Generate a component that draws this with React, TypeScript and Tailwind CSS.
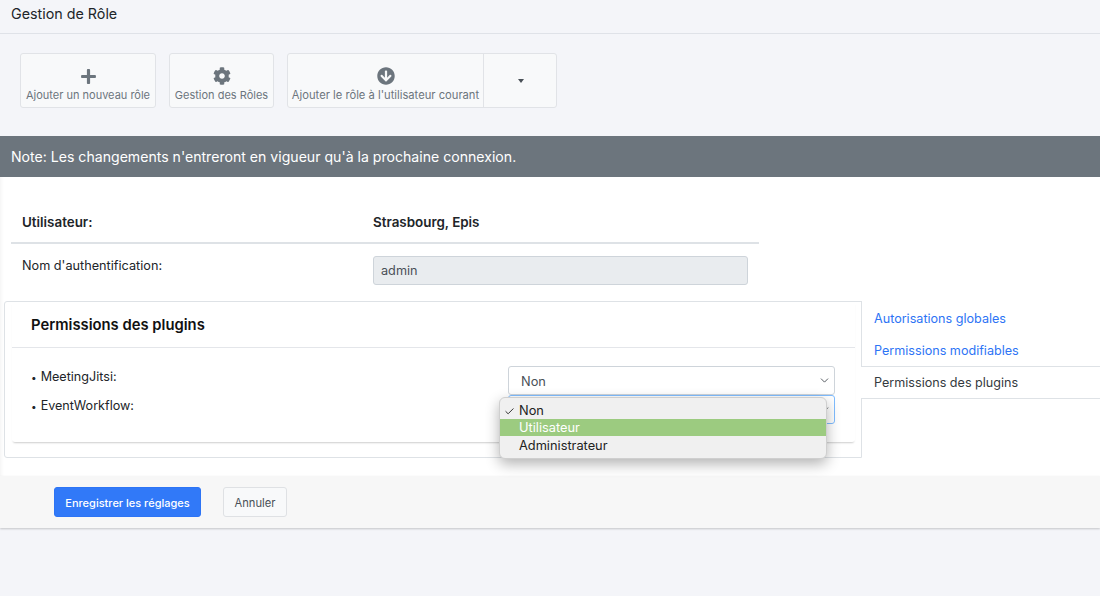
import { ChevronDown, Check } from 'lucide-react'
import { FaPlus, FaCog, FaArrowCircleDown } from 'react-icons/fa'

function ToolButton({ label, icon, width, size }: { label: string; icon: React.ReactNode; width: string; size: string }) {
  return (
    <div className={`${width} flex h-full flex-col items-center justify-end pb-[5px]`}>
      <div className="flex h-[20px] items-center justify-center text-[#6c757d]">{icon}</div>
      <span className={`${size} mt-[2px] whitespace-nowrap leading-[14px] text-[#6c757d]`}>{label}</span>
    </div>
  )
}

function SelectBox({ focus }: { focus?: boolean }) {
  return (
    <div
      className={`flex h-[29px] w-[327px] items-center justify-between rounded-[3px] border bg-white pl-[12px] pr-[3px] text-[12.8px] text-[#495057] ${
        focus ? 'border-[#80bdff]' : 'border-[#ced4da]'
      }`}
    >
      <span className="pt-[2px]">Non</span>
      <ChevronDown size={13} strokeWidth={1.5} className="text-[#343a40]" />
    </div>
  )
}

function PluginRow({ label }: { label: string }) {
  return (
    <div className="flex h-[29px] items-start">
      <span className="w-[496px] pl-[19px] text-[12.6px] leading-[21px] text-[#212529]">
        <span className="mr-[4px] text-[10px]">•</span>
        {label}
      </span>
      <SelectBox focus={label === 'EventWorkflow:'} />
    </div>
  )
}

export default function App() {
  return (
    <div className="relative flex h-[596px] w-[1100px] flex-col overflow-hidden bg-[#f4f5f9] font-['Inter',sans-serif]">
      <header className="flex h-[34px] items-center border-b border-[#dfe2e8] px-[11px] pb-[6px] text-[14.3px] text-[#212529]">
        Gestion de Rôle
      </header>

      <div className="flex h-[102px] items-start gap-[13px] pl-[20px] pt-[19px]">
        <div className="h-[55px] rounded-[3px] border border-[#e1e3e7] bg-[#f8f9fa]">
          <ToolButton width="w-[134px]" size="text-[11px]" label="Ajouter un nouveau rôle" icon={<FaPlus size={17} />} />
        </div>
        <div className="h-[55px] rounded-[3px] border border-[#e1e3e7] bg-[#f8f9fa]">
          <ToolButton width="w-[103px]" size="text-[11px]" label="Gestion des Rôles" icon={<FaCog size={18} />} />
        </div>
        <div className="flex h-[55px] rounded-[3px] border border-[#e1e3e7] bg-[#f8f9fa]">
          <ToolButton
            width="w-[195px]"
            size="text-[11.2px]"
            label="Ajouter le rôle à l'utilisateur courant"
            icon={<FaArrowCircleDown size={18} />}
          />
          <div className="flex w-[73px] items-center justify-center border-l border-[#e1e3e7] pl-[2px]">
            <span className="h-0 w-0 border-x-[3.5px] border-t-[4px] border-x-transparent border-t-[#495057]" />
          </div>
        </div>
      </div>

      <div className="flex h-[41px] items-center bg-[#6c757d] px-[11px] text-[14.1px] text-white">
        Note: Les changements n'entreront en vigueur qu'à la prochaine connexion.
      </div>

      <main className="h-[299px] bg-white shadow-[inset_5px_0_5px_-5px_rgba(0,0,0,0.08)]">
        <div className="ml-[11px] flex h-[67px] w-[748px] items-start border-b-2 border-[#dee2e6] pt-[36px] text-[13.4px] leading-[18px] font-semibold text-[#212529]">
          <span className="w-[362px] pl-[11px]">Utilisateur:</span>
          <span>Strasbourg, Epis</span>
        </div>
        <div className="ml-[11px] flex h-[57px] w-[748px] items-start pt-[12px] text-[12.7px] text-[#212529]">
          <span className="w-[362px] pl-[11px] leading-[19px]">Nom d'authentification:</span>
          <div className="flex h-[29px] w-[375px] items-center rounded-[3px] border border-[#ced4da] bg-[#e9ecef] px-[7px] text-[#495057]">
            admin
          </div>
        </div>

        <div className="flex items-start pl-[4px]">
          <div className="h-[157px] w-[858px] rounded-l-[3px] border border-[#dee2e6] bg-white pr-[6px] pl-[7px]">
            <div className="h-[140px] rounded-b-[3px] shadow-[0_2px_2px_-1px_rgba(0,0,0,0.2)]">
              <div className="flex h-[46px] items-center border-b border-[#e4e6ea] pt-[1px] pl-[19px] text-[14.8px] font-semibold text-[#111]">
                Permissions des plugins
              </div>
              <div className="pt-[18px] pr-[19px]">
                <PluginRow label="MeetingJitsi:" />
                <PluginRow label="EventWorkflow:" />
              </div>
            </div>
          </div>
          <nav className="-ml-px w-[239px] text-[12.6px]">
            <div className="flex h-[65px] flex-col border-l border-[#dee2e6] pt-[3px] pl-[12px] text-[#2d74f5]">
              <span className="flex h-[32px] items-center">Autorisations globales</span>
              <span className="flex h-[32px] items-center pt-[1px]">Permissions modifiables</span>
            </div>
            <div className="flex h-[33px] items-center border-y border-[#dee2e6] bg-white pt-[1px] pl-[13px] text-[#343a40]">
              Permissions des plugins
            </div>
          </nav>
        </div>
      </main>

      <footer className="flex h-[52px] items-start gap-[22px] bg-[#f7f7f7] pt-[11px] pl-[54px] shadow-[0_1px_2px_rgba(0,0,0,0.2)]">
        <button className="h-[30px] w-[147px] rounded-[3px] border border-[#2d74f5] bg-[#3179f8] pt-[2px] text-[11px] font-medium text-white">
          Enregistrer les réglages
        </button>
        <button className="h-[30px] w-[64px] rounded-[3px] border border-[#dfe1e4] bg-[#f8f9fa] pt-[2px] text-[11.2px] text-[#495057]">
          Annuler
        </button>
      </footer>

      <div className="absolute top-[397px] left-[499px] w-[328px] rounded-[6px] border border-[#cfcfcf] bg-[#f0f0f0] pt-[3px] pb-[4px] text-[12.8px] leading-[17.6px] text-[#222] shadow-[0_5px_14px_rgba(0,0,0,0.3)]">
        <div className="relative h-[17.6px] pt-[1px] pl-[19px]">
          <Check size={11} strokeWidth={2} className="absolute top-[5px] left-[4px]" />
          Non
        </div>
        <div className="bg-[#9ccb80] pl-[19px] text-white">Utilisateur</div>
        <div className="h-[17.6px] pt-[1px] pl-[19px]">Administrateur</div>
      </div>
    </div>
  )
}
